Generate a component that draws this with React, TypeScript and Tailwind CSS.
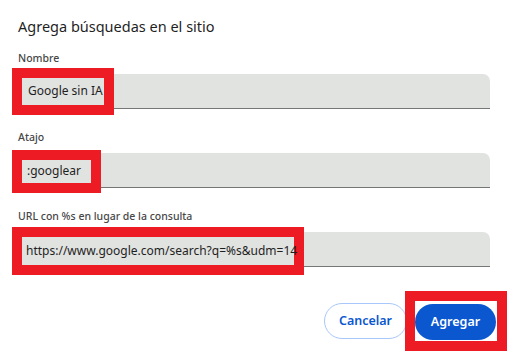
import * as React from "react";

const FONT = { fontFamily: '"Noto Sans", "Open Sans", sans-serif' };

function Field({
  label,
  value,
  boxClass,
}: {
  label: string;
  value: string;
  boxClass: string;
}) {
  return (
    <div className="flex flex-col">
      <span className="text-[10.5px] leading-4 font-medium text-[#474747]">{label}</span>
      {/* input with red highlight frame around the typed value */}
      <div className="mt-2 flex h-[35px] items-center rounded-t-[7px] border-b border-[#747775] bg-[#e1e3e1]">
        <span
          className={`-ml-[6px] flex items-center whitespace-nowrap border-[10px] border-[#ed1c24] bg-[#e1e3e1] text-[12px] text-[#1f1f1f] ${boxClass}`}
        >
          {value}
        </span>
      </div>
    </div>
  );
}

export default function App() {
  return (
    <div className="h-[354px] w-[507px] overflow-hidden bg-white" style={FONT}>
      <div className="flex flex-col pl-[18px] pr-[17px] pt-[14px]">
        <h1 className="text-[14.5px] leading-6 text-[#1f1f1f]">Agrega búsquedas en el sitio</h1>

        <div className="mt-3 flex flex-col gap-5">
          <Field label="Nombre" value="Google sin IA" boxClass="h-[47px] w-[102px] pl-[6px]" />
          <Field label="Atajo" value=":googlear" boxClass="mt-[2px] h-[43px] w-[89px] pl-[5px]" />
          <Field
            label="URL con %s en lugar de la consulta"
            value="https://www.google.com/search?q=%s&udm=14"
            boxClass="mt-[3px] h-[48px] w-[292px] pl-[4px]"
          />
        </div>
      </div>

      {/* footer buttons */}
      <div className="mt-[24px] flex items-center justify-end">
        <button className="h-[36px] w-[83px] rounded-full border border-[#a8c7fa] text-[12.5px] font-semibold text-[#0b57d0]">
          Cancelar
        </button>
        <div className="-ml-[2px] border-[10px] border-[#ed1c24] bg-white pb-px pr-px pt-[3px]">
          <button className="h-[36px] w-[81px] rounded-full bg-[#0b57d0] text-[12.5px] font-semibold text-white">
            Agregar
          </button>
        </div>
      </div>
    </div>
  );
}
